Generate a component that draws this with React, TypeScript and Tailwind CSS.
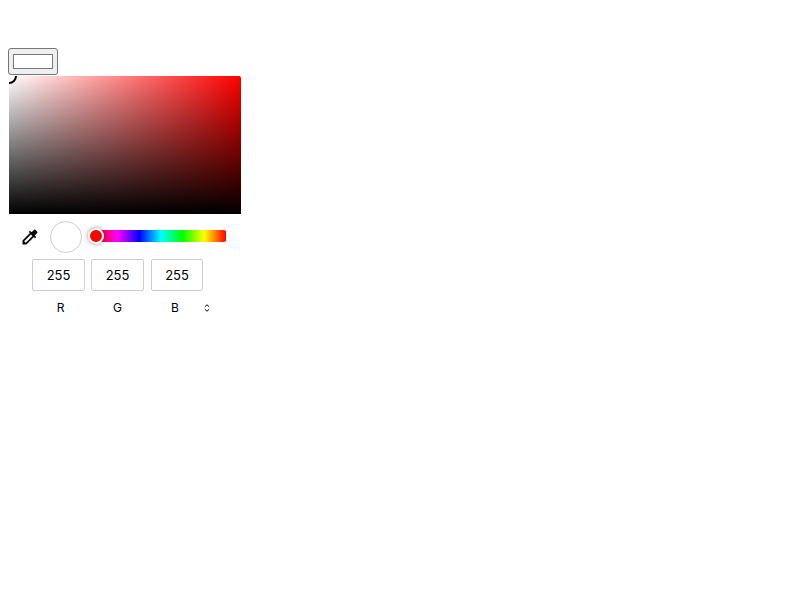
const channels = [
  { name: "R", value: 255, box: "w-[53px]", label: "w-[57px]" },
  { name: "G", value: 255, box: "w-[53px] ml-[6px]", label: "w-[57px]" },
  { name: "B", value: 255, box: "w-[52px] ml-[7px]", label: "w-[58px]" },
];

function Eyedropper() {
  return (
    <svg className="h-5 w-5" viewBox="0 0 24 24" fill="black">
      <path d="M20.71 5.63l-2.34-2.34a1 1 0 0 0-1.41 0l-3.12 3.12-1.93-1.91-1.41 1.41 1.42 1.42L3 16.25V21h4.75l8.92-8.92 1.42 1.42 1.41-1.41-1.92-1.92 3.12-3.12c.4-.4.4-1.03.01-1.42zM6.92 19L5 17.08l8.06-8.06 1.92 1.92L6.92 19z" />
    </svg>
  );
}

export default function App() {
  return (
    <main className="h-[600px] w-[800px] overflow-hidden bg-white pl-2 pt-12 font-['Inter',sans-serif] text-black">
      <button aria-label="Selected color" className="block h-[27px] w-[50px] rounded-[3px] border border-[#767676] bg-[#efefef] px-1 py-[5px]">
        <span className="block h-[15px] w-10 border border-[#777777] bg-white" />
      </button>
      <section className="ml-px mt-px w-[232px]">
        <div className="relative h-[138px] overflow-hidden rounded-tr-[2px] bg-[linear-gradient(to_top,black,transparent),linear-gradient(to_right,white,red)]">
          <span className="absolute -left-2 -top-2 h-4 w-4 rounded-full border-2 border-black bg-white" />
        </div>
        <div className="flex h-[45px] pl-[11px] pt-[7px]">
          <div className="mt-[6px] h-5 w-5"><Eyedropper /></div>
          <span className="ml-[10px] h-8 w-8 rounded-full border border-[#cecece] bg-white" />
          <div className="relative ml-[14px] mt-[9px] h-3 w-[130px] rounded-[2px] bg-[linear-gradient(to_right,#f00,#f0f,#00f,#0ff,#0f0,#ff0,#f00)]">
            <span className="absolute -left-2 -top-[2px] h-4 w-4 rounded-full border-2 border-white bg-[#f00] shadow-[0_0_4px_rgba(0,0,0,0.45)]" />
          </div>
        </div>
        <div className="flex pl-[23px]">
          {channels.map((c) => (
            <div key={c.name} className={`${c.box} flex h-8 items-center justify-center rounded-[2px] border border-[#cecece] pt-px text-[13px]`}>
              {c.value}
            </div>
          ))}
        </div>
        <div className="mt-[9px] flex h-4 items-center pl-[23px] text-[12px]">
          {channels.map((c) => (
            <span key={c.name} className={`${c.label} text-center`}>{c.name}</span>
          ))}
          <svg className="h-2 w-[6px]" viewBox="0 0 6 8" fill="none" stroke="black" strokeWidth="1">
            <path d="M.8 2.8 3 .8l2.2 2M.8 5.2 3 7.2l2.2-2" />
          </svg>
        </div>
      </section>
    </main>
  );
}
